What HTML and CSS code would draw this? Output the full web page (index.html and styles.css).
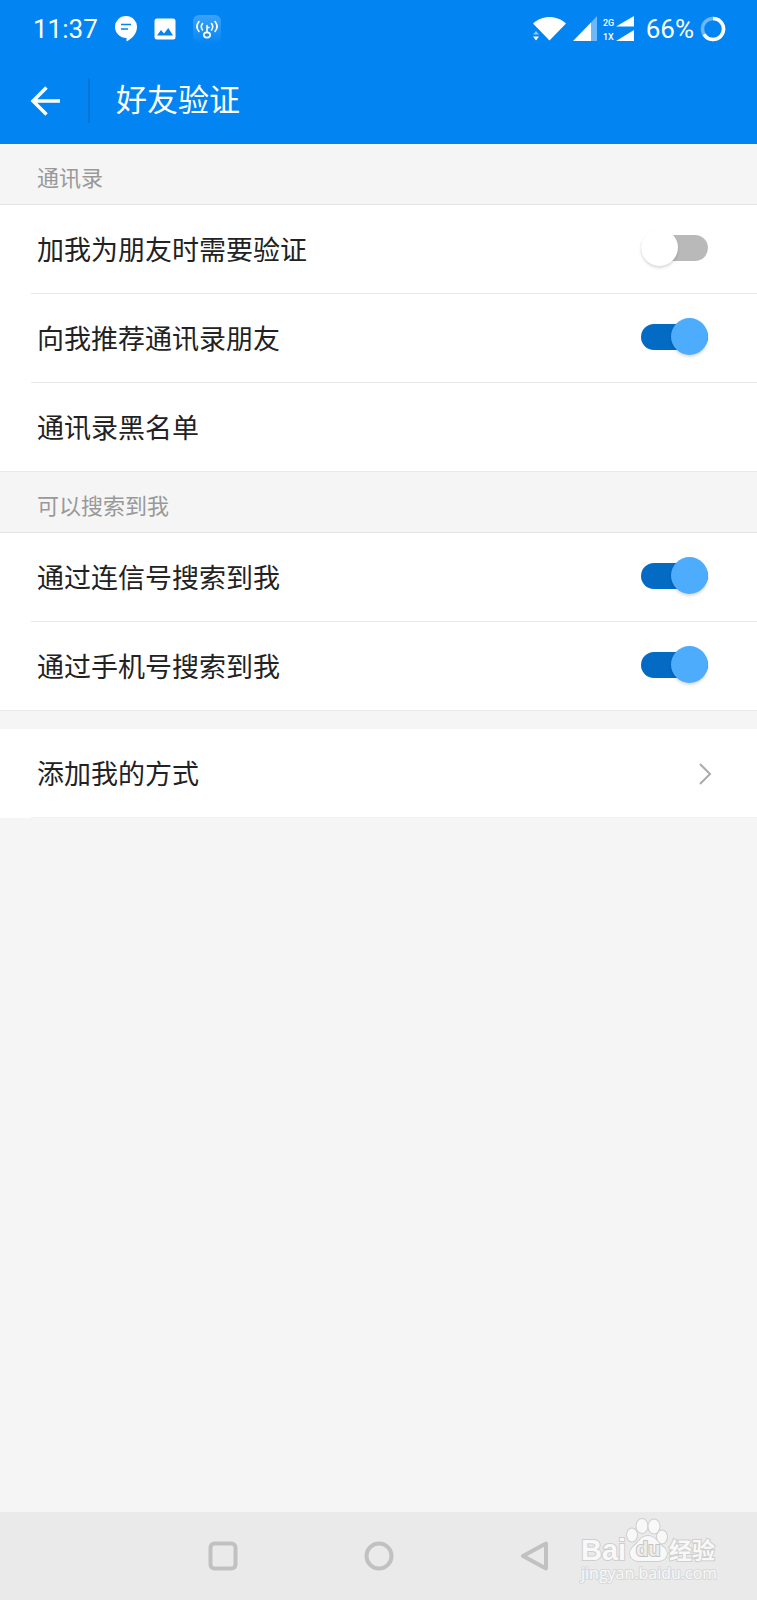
FILE: index.html
```html
<!DOCTYPE html>
<html lang="zh-CN">
<head>
    <meta charset="UTF-8">
    <meta name="viewport" content="width=device-width, initial-scale=1.0">
    <title>好友验证</title>
    <link rel="stylesheet" href="styles.css">
</head>
<body>

    <header>
        <div class="status-bar">
            <div class="status-left">
                <span class="time">11:37</span>
                <svg width="22" height="26" viewBox="0 0 22 26" aria-hidden="true">
                    <path fill="#fff" d="M11 0a11 10.800 0 0 1 11 11c0 6-4.500 11.500-10.500 14.500V22C5 22 0 17 0 11A11 10.800 0 0 1 11 0z"/>
                    <path stroke="#0285f3" stroke-width="1.500" d="M6 8.500h10M6 13h7"/>
                </svg>
                <svg width="22" height="22" viewBox="0 0 22 22" aria-hidden="true">
                    <rect width="21" height="21" x=".5" y=".5" rx="2.500" fill="#fff"/>
                    <path fill="#0285f3" d="M3 17.500l4-5.500 3 3.500 4.300-5.500 4.700 7.500z"/>
                </svg>
                <svg width="28" height="28" viewBox="0 0 28 28" aria-hidden="true">
                    <defs>
                        <linearGradient id="key-bg" x1="0" y1="0" x2="0" y2="1">
                            <stop offset="0" stop-color="#3ba2f8"/>
                            <stop offset="1" stop-color="#0586f3"/>
                        </linearGradient>
                    </defs>
                    <rect width="28" height="28" rx="6" fill="url(#key-bg)"/>
                    <g fill="none" stroke="#fff" stroke-width="1.600" stroke-linecap="round">
                        <path d="M6 6.500c-2.500 3-2.500 7 0 10M9.500 8.500c-1.500 2-1.500 4.500 0 6.500M22 6.500c2.500 3 2.500 7 0 10M18.500 8.500c1.500 2 1.500 4.500 0 6.500"/>
                        <path d="M14 17v-6.500M14 12.500h2"/>
                        <ellipse cx="14" cy="20" rx="3.200" ry="2.600"/>
                    </g>
                </svg>
            </div>
            <div class="status-right">
                <svg width="34" height="26" viewBox="0 0 34 26" aria-hidden="true">
                    <path fill="#fff" d="M0 7.500C9-1.300 24-1.300 33 7.500L16.500 24.500z"/>
                    <path fill="#8cc8fa" d="M0 18.500l3-3.500 3 3.500z"/>
                    <path fill="#fff" d="M0 20.500h6l-3 4z"/>
                </svg>
                <svg width="24" height="26" viewBox="0 0 24 26" aria-hidden="true">
                    <path fill="#6cb8f9" d="M18 6.500L24 0v25h-6z"/>
                    <path fill="#fff" d="M0 25L18 6.500V25z"/>
                </svg>
                <svg class="network" width="31" height="26" viewBox="0 0 31 26" aria-hidden="true">
                    <text x="0" y="10">2G</text>
                    <text x="0" y="24">1X</text>
                    <path fill="#fff" d="M13 10.500L31 0v10.500zM13 25l18-11v11z"/>
                </svg>
                <span class="battery">66%</span>
                <svg width="26" height="26" viewBox="0 0 26 26" aria-hidden="true">
                    <circle cx="13" cy="13" r="10.500" fill="none" stroke="#6cb8f9" stroke-width="3.500"/>
                    <path fill="none" stroke="#fff" stroke-width="3.500" d="M13 2.500A10.500 10.500 0 1 1 4 18.400"/>
                </svg>
            </div>
        </div>
        <div class="title-bar">
            <button type="button" class="back-button" aria-label="返回">
                <svg width="30" height="30" viewBox="0 0 30 30" aria-hidden="true">
                    <path fill="none" stroke="#fff" stroke-width="3.400" d="M30 15H3M16.500 1.500L3 15l13.500 13.500"/>
                </svg>
            </button>
            <h1>好友验证</h1>
        </div>
    </header>

    <main>
        <section>
            <h2>通讯录</h2>
            <label class="row">
                <span>加我为朋友时需要验证</span>
                <input type="checkbox" class="switch">
            </label>
            <label class="row">
                <span>向我推荐通讯录朋友</span>
                <input type="checkbox" class="switch" checked>
            </label>
            <a class="row" href="#">
                <span>通讯录黑名单</span>
            </a>
        </section>

        <section>
            <h2>可以搜索到我</h2>
            <label class="row">
                <span>通过连信号搜索到我</span>
                <input type="checkbox" class="switch" checked>
            </label>
            <label class="row">
                <span>通过手机号搜索到我</span>
                <input type="checkbox" class="switch" checked>
            </label>
        </section>

        <section class="more">
            <a class="row" href="#">
                <span>添加我的方式</span>
                <svg width="14" height="22" viewBox="0 0 14 22" aria-hidden="true">
                    <path fill="none" stroke="#aaa" stroke-width="2" d="M2 1l10 10L2 21"/>
                </svg>
            </a>
        </section>
    </main>

    <nav>
        <button type="button" aria-label="最近任务">
            <svg width="30" height="30" viewBox="0 0 30 30" aria-hidden="true">
                <rect x="2.500" y="2.500" width="25" height="25" rx="4"/>
            </svg>
        </button>
        <button type="button" aria-label="主页">
            <svg width="30" height="30" viewBox="0 0 30 30" aria-hidden="true">
                <circle cx="15" cy="15" r="12.500"/>
            </svg>
        </button>
        <button type="button" aria-label="后退">
            <svg width="30" height="30" viewBox="0 0 30 30" aria-hidden="true">
                <path stroke-linejoin="round" d="M26 2.500v25L3 15z"/>
            </svg>
        </button>

        <svg class="watermark" width="140" height="68" viewBox="0 0 140 68" role="img" aria-label="Baidu经验">
            <text class="brand" x="2" y="42">Bai</text>
            <g class="paw">
                <ellipse cx="53" cy="17" rx="5" ry="6.500"/>
                <ellipse cx="63" cy="8" rx="5.500" ry="7"/>
                <ellipse cx="75" cy="8.500" rx="5.500" ry="7"/>
                <ellipse cx="83" cy="19" rx="5" ry="6.500"/>
                <path d="M69 18c7 0 9 6 14 10 5 4 6 7 4 11-3 5-10 4-18 4s-14 1-17-4c-2-4-1-7 3-11 5-4 7-10 14-10z"/>
            </g>
            <text class="du" x="57" y="38">du</text>
            <text class="cn" x="90" y="41">经验</text>
            <text class="url" x="2" y="61">jingyan.baidu.com</text>
        </svg>
    </nav>

</body>
</html>
```
FILE: styles.css
```css
* {
    box-sizing: border-box;
}

body {
    display: flex;
    flex-direction: column;
    min-height: 100vh;
    margin: 0;
    background: #f5f5f5;
    color: #222;
    font-family: Roboto, "Noto Sans CJK SC", sans-serif;
}

svg {
    display: block;
    flex: none;
}

button {
    padding: 0;
    border: none;
    background: none;
    cursor: pointer;
}

header {
    background: #0285f3;
    color: #fff;
}

.status-bar {
    display: flex;
    justify-content: space-between;
    align-items: center;
    height: 57px;
    padding: 0 31px 0 33px;
}

.status-left,
.status-right {
    display: flex;
    align-items: center;
}

.status-left {
    gap: 17px;
}

.status-right {
    gap: 6px;
}

.time,
.battery {
    font-size: 26px;
    line-height: 30px;
}

.battery {
    margin-left: 6px;
}

.network text {
    fill: #fff;
    font-size: 9px;
    font-weight: 500;
}

.title-bar {
    display: flex;
    align-items: center;
    height: 87px;
    padding-left: 30px;
}

.back-button {
    width: 30px;
    height: 30px;
}

h1 {
    margin: 0 0 0 28px;
    padding-left: 26px;
    border-left: 2px solid #0475d5;
    font-size: 31px;
    font-weight: 400;
    line-height: 45px;
}

main {
    flex: 1;
}

h2 {
    margin: 0;
    padding: 10px 37px 0;
    height: 61px;
    border-bottom: 1px solid #e4e4e4;
    color: #999;
    font-size: 22px;
    font-weight: 400;
    line-height: 50px;
}

.row {
    display: flex;
    justify-content: space-between;
    align-items: center;
    height: 89px;
    padding: 0 49px 0 37px;
    background: linear-gradient(#e8e8e8, #e8e8e8) 31px 100% / 100% 1px no-repeat #fff;
    color: #222;
    font-size: 27px;
    line-height: 40px;
    text-decoration: none;
    cursor: pointer;
}

.row span {
    padding-top: 2px;
}

.row:last-child {
    background-position: 0 100%;
}

.more {
    margin-top: 18px;
}

.more .row {
    padding-right: 45px;
    background-image: linear-gradient(#f2f2f2, #f2f2f2);
    background-position: 31px 100%;
}

.switch {
    display: flex;
    align-items: center;
    appearance: none;
    width: 67px;
    height: 26px;
    margin: 0 0 4px;
    border-radius: 13px;
    background: #b9b9b9;
    cursor: pointer;
}

.switch::before {
    content: "";
    flex: none;
    width: 37px;
    height: 37px;
    border-radius: 50%;
    background: #fff;
    box-shadow: 0 2px 3px rgba(0, 0, 0, 0.15);
}

.switch:checked {
    justify-content: flex-end;
    background: #036bc3;
}

.switch:checked::before {
    background: #4eacfc;
}

nav {
    position: relative;
    display: flex;
    justify-content: center;
    align-items: center;
    gap: 126px;
    height: 88px;
    background: #eaeaea;
}

nav button svg {
    fill: none;
    stroke: #c1c1c1;
    stroke-width: 4px;
}

.watermark {
    position: absolute;
    right: 38px;
    bottom: 14px;
    fill: #f8f8f8;
    stroke: #cecece;
    stroke-width: 2px;
    paint-order: stroke;
}

.watermark .brand {
    font: 700 29px "Liberation Sans", sans-serif;
}

.watermark .du {
    fill: #ececec;
    stroke: #c4c4c4;
    font: 700 20px "Liberation Sans", sans-serif;
}

.watermark .cn {
    font: 700 23px "Noto Sans CJK SC", sans-serif;
}

.watermark .url {
    stroke: #d8d8d8;
    font: 400 16px "Open Sans", sans-serif;
}
```
